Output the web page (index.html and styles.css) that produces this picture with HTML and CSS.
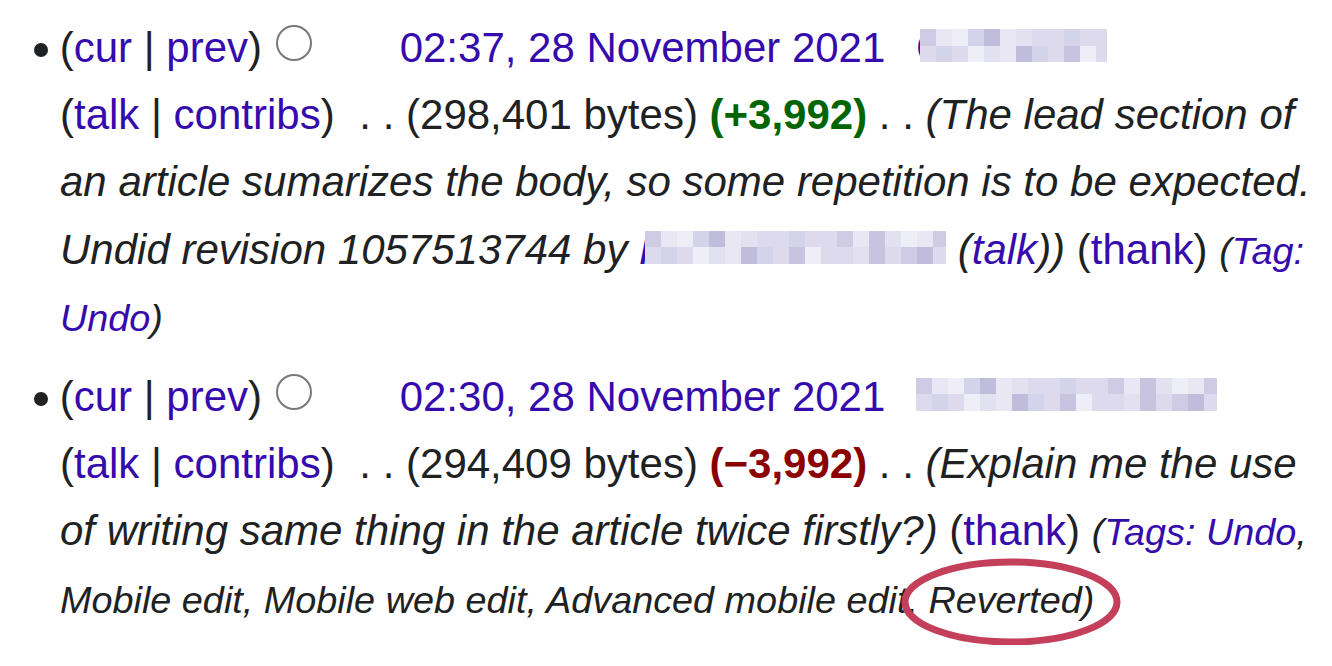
FILE: index.html
```html
<!DOCTYPE html>
<html lang="en">
<head>
<meta charset="utf-8">
<title>Revision history</title>
<link rel="stylesheet" href="styles.css">
</head>
<body>
<ul class="history">
  <li class="rev">
    <span class="links">(<a href="#">cur</a> | <a href="#">prev</a>)</span> <span class="radio"></span><span class="radio radio-hidden"></span><a class="date" href="#">02:37, 28 November 2021</a> <span class="user"><a class="peek" href="#">C</a><span class="blur blur-short"><span class="cells"><i></i><i></i><i></i><i></i><i></i><i></i><i></i><i></i><i></i><i></i><i></i><i></i><i></i><i></i><i></i><i></i><i></i><i></i><i></i><i></i><i></i><i></i><i></i><i></i><i></i><i></i><i></i><i></i><i></i><i></i><i></i><i></i><i></i><i></i><i></i><i></i><i></i><i></i><i></i><i></i></span></span></span> <span class="tool-links">(<a href="#">talk</a> | <a href="#">contribs</a>)</span> <span class="sep">. .</span> <span class="size">(298,401 bytes)</span> <strong class="plus">(+3,992)</strong> <span class="sep">. .</span> <span class="comment">(The lead section of an article sumarizes the body, so some repetition is to be expected. Undid revision 1057513744 by <a class="peek peek-k" href="#">K</a><span class="blur blur-long"><span class="cells"><i></i><i></i><i></i><i></i><i></i><i></i><i></i><i></i><i></i><i></i><i></i><i></i><i></i><i></i><i></i><i></i><i></i><i></i><i></i><i></i><i></i><i></i><i></i><i></i><i></i><i></i><i></i><i></i><i></i><i></i><i></i><i></i><i></i><i></i><i></i><i></i><i></i><i></i><i></i><i></i></span></span> (<a href="#">talk</a>))</span> <span class="thank">(<a href="#">thank</a>)</span> <span class="tags">(<a href="#">Tag:</a> <a href="#">Undo</a>)</span>
  </li>
  <li class="rev">
    <span class="links">(<a href="#">cur</a> | <a href="#">prev</a>)</span> <span class="radio"></span><span class="radio radio-hidden"></span><a class="date" href="#">02:30, 28 November 2021</a> <span class="user"><span class="blur blur-long blur-second"><span class="cells"><i></i><i></i><i></i><i></i><i></i><i></i><i></i><i></i><i></i><i></i><i></i><i></i><i></i><i></i><i></i><i></i><i></i><i></i><i></i><i></i><i></i><i></i><i></i><i></i><i></i><i></i><i></i><i></i><i></i><i></i><i></i><i></i><i></i><i></i><i></i><i></i><i></i><i></i><i></i><i></i></span></span></span> <span class="tool-links">(<a href="#">talk</a> | <a href="#">contribs</a>)</span> <span class="sep">. .</span> <span class="size">(294,409 bytes)</span> <strong class="minus">(&minus;3,992)</strong> <span class="sep">. .</span> <span class="comment">(Explain me the use of writing same thing in the article twice firstly?)</span> <span class="thank">(<a href="#">thank</a>)</span> <span class="tags">(<a href="#">Tags:</a> <a href="#">Undo</a>, Mobile edit, Mobile web edit, Advanced mobile edit, <span class="circled">Reverted)<svg class="ring" viewBox="0 0 220 88" aria-hidden="true"><ellipse cx="110" cy="44" rx="106" ry="40" fill="none" stroke="#c4405a" stroke-width="7"/></svg></span></span>
  </li>
</ul>
</body>
</html>
```

FILE: styles.css
```css
html, body {
  margin: 0;
  background: #ffffff;
}

body {
  font-family: "Liberation Sans", Arial, sans-serif;
  font-size: 42px;
  line-height: 1.6;
  color: #202122;
}

a {
  color: #360bad;
  text-decoration: none;
}

.history {
  margin: 14px 0 0;
  padding: 0 10px 0 60px;
  list-style: none;
}

.rev {
  margin-bottom: 13px;
}

.rev::before {
  content: "";
  display: inline-block;
  width: 14px;
  height: 14px;
  border-radius: 50%;
  background: #202122;
  margin: 0 0 5px -26px;
  vertical-align: baseline;
}

.radio {
  display: inline-block;
  box-sizing: border-box;
  width: 36px;
  height: 36px;
  border: 2.5px solid #77797e;
  border-radius: 50%;
  margin: 0 0 1px 2px;
  vertical-align: baseline;
}

.radio-hidden {
  visibility: hidden;
  margin: 0 26px 1px 26px;
}

.user {
  margin-left: 19px;
}

.peek {
  color: #360bad;
}

.blur {
  display: inline-block;
  overflow: hidden;
  height: 33px;
  vertical-align: baseline;
  position: relative;
}

.blur-short {
  width: 187px;
  margin-left: -26px;
}

.blur-long {
  width: 301px;
}

.peek-k {
  font-style: italic;
}

.comment .blur-long {
  margin-left: -22px;
}

.cells {
  display: grid;
  grid-template-columns: repeat(20, 16px);
  grid-auto-rows: 16.5px;
}

.cells i {
  display: block;
  background: #dcdaec;
}

.cells i:nth-child(3n+1) { background: #cfcbe4; }
.cells i:nth-child(4n+2) { background: #e8e7f3; }
.cells i:nth-child(5n) { background: #c8c4e0; }
.cells i:nth-child(7n+3) { background: #eeeef6; }
.cells i:nth-child(6n+4) { background: #d3d3ea; }
.cells i:nth-child(11n+5) { background: #c0bcdb; }
.cells i:nth-child(9n+7) { background: #e2e1f0; }

.tool-links {
  white-space: nowrap;
  margin-right: 13px;
}

.plus {
  color: #006400;
  font-weight: bold;
}

.minus {
  color: #8b0000;
  font-weight: bold;
}

.comment {
  font-style: italic;
}

.tags {
  font-size: 37.8px;
  font-style: italic;
}

.circled {
  position: relative;
}

.ring {
  position: absolute;
  left: -27px;
  top: -21px;
  width: 220px;
  height: 88px;
  overflow: visible;
  pointer-events: none;
}
```
